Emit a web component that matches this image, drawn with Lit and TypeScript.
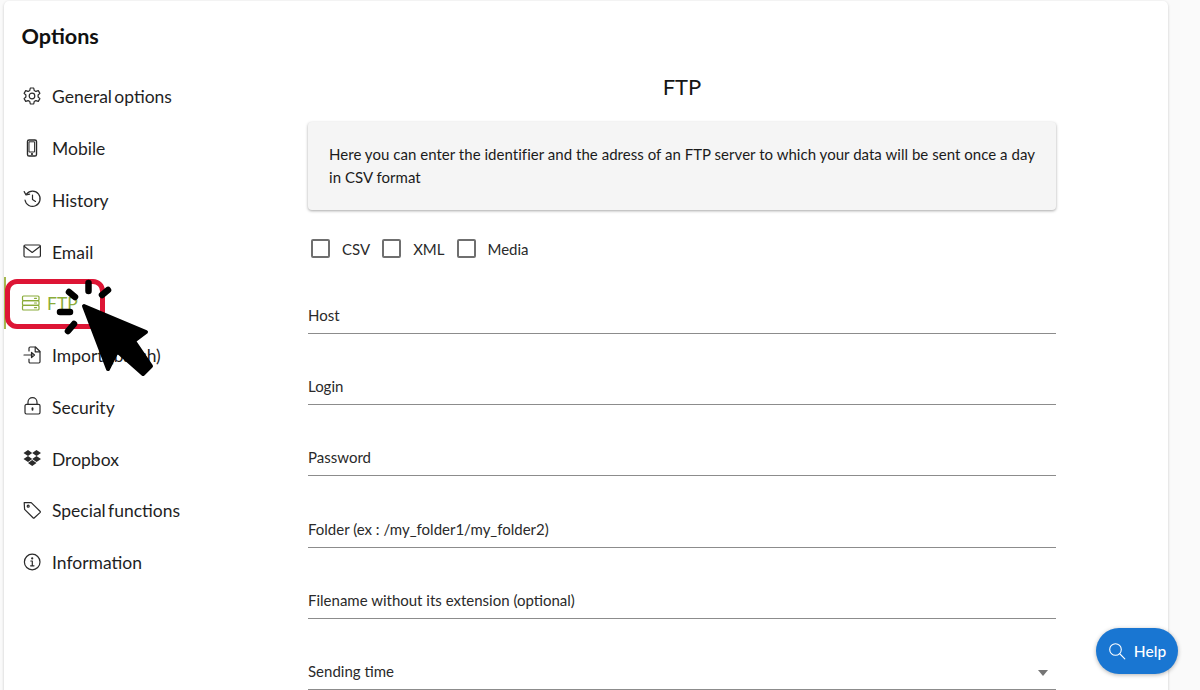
import { LitElement, html, css, svg } from "lit";
import { customElement } from "lit/decorators.js";

const ic = (body: unknown) => html`<svg class="ic" viewBox="0 0 20 20" fill="none" stroke="currentColor" stroke-width="1.2" stroke-linecap="round" stroke-linejoin="round">${body}</svg>`;

const icons: Record<string, unknown> = {
  gear: svg`<circle cx="10" cy="10" r="2.8"/><path d="M8.3 2h3.400l.5 2.400 1.700 1 2.400-.8 1.600 2.800-1.800 1.600v2l1.800 1.600-1.600 2.800-2.400-.8-1.700 1-.5 2.400H8.300l-.5-2.400-1.700-1-2.400.8-1.600-2.800 1.800-1.600V9L2.100 7.400l1.600-2.800 2.400.8 1.700-1z"/>`,
  mobile: svg`<rect x="5.5" y="2" width="9" height="16" rx="1.6" stroke-width="1.4"/><rect x="7.4" y="3.8" width="5.2" height="10.2" stroke-width="1"/><circle cx="10" cy="16" r=".5" fill="currentColor"/>`,
  history: svg`<path d="M4.6 5A7.6 7.6 0 1 1 3 11"/><path d="M2.2 2.6 4 6l3.6-.8"/><path d="M10.5 6v4.6l3 1.8"/>`,
  mail: svg`<rect x="2" y="4" width="16.4" height="12" rx="1.2"/><path d="m2.4 5.4 7.8 6 7.8-6"/>`,
  server: svg`<rect x="1.5" y="3" width="16.500" height="4.600" rx="1"/><rect x="1.500" y="7.700" width="16.500" height="4.600" rx="1"/><rect x="1.500" y="12.400" width="16.500" height="4.600" rx="1"/><path d="M13.500 5.300h2M13.500 10h2M13.500 14.700h2"/>`,
  import: svg`<path d="M7 6V3.200c0-.7.5-1.200 1.200-1.200h5.300L18 6.500v10.300c0 .7-.5 1.200-1.200 1.200H8.200C7.500 18 7 17.500 7 16.800V14"/><path d="M13.200 2.200v4.600h4.600"/><path d="M2 10h9"/><path d="m9.500 7.400 3 2.600-3 2.600z"/>`,
  lock: svg`<rect x="3" y="8.400" width="15" height="9.600" rx="1.400"/><path d="M6 8.400V6.200a4.500 4.500 0 0 1 9 0v2.200"/><path d="M10.500 12.200v1.600" stroke-width="1.800"/>`,
  dropbox: svg`<path fill="currentColor" stroke="none" d="M6 2 1.500 5 6 8l4.200-3zM14.500 2 10.200 5l4.300 3 4.500-3zM1.500 11 6 14l4.200-3L6 8zM14.500 8l-4.300 3 4.300 3 4.500-3zM6 15l4.200 3 4.300-3-4.300-3z"/>`,
  tag: svg`<path d="M2.200 2.600h7L18 11.200a1 1 0 0 1 0 1.400l-5.600 5.200a1 1 0 0 1-1.400 0L2.600 9.400z"/><circle cx="6.200" cy="6.200" r="1"/>`,
  info: svg`<circle cx="10.200" cy="10" r="7.800"/><path d="M8.800 9h1.500v4.600M8.600 13.800h3.400"/><circle cx="10.200" cy="6.400" r=".5" fill="currentColor"/>`,
};

const nav = [
  ["gear", "General options"], ["mobile", "Mobile"], ["history", "History"], ["mail", "Email"],
  ["server", "FTP"], ["import", "Import (batch)"], ["lock", "Security"], ["dropbox", "Dropbox"],
  ["tag", "Special functions"], ["info", "Information"],
];
const fields = ["Host", "Login", "Password", "Folder (ex : /my_folder1/my_folder2)", "Filename without its extension (optional)"];

@customElement("app-root")
export class AppRoot extends LitElement {
  static styles = css`
    :host { display: block; width: 1200px; height: 690px; overflow: hidden; position: relative; background: #fafafa; font-family: Lato, sans-serif; color: #1b1b1b; }
    .card { box-sizing: border-box; width: 1164px; height: 700px; margin: 1px 0 0 4px; background: #fff; border-radius: 5px; box-shadow: 0 1px 3px rgba(0,0,0,.2); display: flex; }
    .side { width: 304px; flex: none; padding: 20px 0 0 0; box-sizing: border-box; }
    h1 { margin: 0 0 0 17.5px; font-size: 21.6px; line-height: 30px; font-weight: 700; color: #111; }
    ul { list-style: none; margin: 20px 0 0; padding: 0; }
    li { height: 51.75px; display: flex; align-items: center; padding-left: 18px; font-size: 17.5px; word-spacing: -2.2px; color: #1f1f1f; box-sizing: border-box; }
    li.wide { word-spacing: 1px; }
    .ic { width: 20px; height: 20px; flex: none; margin-right: 10px; color: #2a2a2a; position: relative; top: -1px; }
    li.active { color: #8aac3a; padding-left: 17px; }
    li.active .ic { color: #8aac3a; margin-right: 6px; }
    .main { width: 748px; flex: none; padding-top: 72px; }
    h2 { margin: 0; text-align: center; font-size: 22px; line-height: 28px; font-weight: 400; color: #151515; }
    .note { margin-top: 21px; background: #f5f5f5; border-radius: 4px; box-shadow: 0 1px 3px rgba(0,0,0,.35); padding: 21px 21px 21px; font-size: 15px; letter-spacing: .035px; line-height: 22.5px; color: #1b1b1b; height: 88px; box-sizing: border-box; }
    .checks { display: flex; align-items: center; margin: 26.5px 0 0 3px; height: 24px; font-size: 15px; color: #2a2a2a; }
    .box { width: 15px; height: 15px; border: 2px solid #6f6f6f; border-radius: 2px; flex: none; margin-right: 12px; }
    .checks span { margin-right: 12px; }
    .checks span.last { margin-right: 0; }
    .fields { margin-top: 2px; }
    .field { height: 71.3px; box-sizing: border-box; border-bottom: 1px solid #8c8c8c; display: flex; align-items: flex-end; justify-content: space-between; padding-bottom: 8px; font-size: 15px; line-height: 20px; color: #2a2a2a; }
    .caret { width: 0; height: 0; border: 5.5px solid transparent; border-top: 6px solid #757575; border-bottom: 0; margin: 0 8px 5px 0; }
    .strip { position: absolute; left: 4px; top: 277px; width: 2px; height: 52px; background: #a5b84f; }
    .ring { position: absolute; left: 5px; top: 279px; width: 100px; height: 50px; box-sizing: border-box; border: 5px solid #dd1535; border-radius: 12px; }
    .cursor { position: absolute; left: 50px; top: 275px; width: 110px; height: 105px; }
    .help { position: absolute; left: 1096px; top: 628px; width: 82px; height: 46px; border-radius: 23px; background: #1976d2; box-shadow: 0 1px 4px rgba(0,0,0,.3); color: #fff; display: flex; align-items: center; justify-content: center; gap: 8px; font-size: 15.5px; font-weight: 500; }
    .help svg { width: 18px; height: 18px; }
  `;

  render() {
    return html`
      <div class="card">
        <aside class="side">
          <h1>Options</h1>
          <ul>
            ${nav.map(([i, t]) => html`<li class=${t === "FTP" ? "active" : t.startsWith("Import") ? "wide" : ""}>${ic(icons[i])}${t}</li>`)}
          </ul>
        </aside>
        <main class="main">
          <h2>FTP</h2>
          <div class="note">Here you can enter the identifier and the adress of an FTP server to which your data will be sent once a day in CSV format</div>
          <div class="checks">
            <i class="box"></i><span>CSV</span>
            <i class="box"></i><span>XML</span>
            <i class="box"></i><span class="last">Media</span>
          </div>
          <div class="fields">
            ${fields.map((f) => html`<div class="field">${f}</div>`)}
            <div class="field">Sending time<i class="caret"></i></div>
          </div>
        </main>
      </div>
      <div class="strip"></div>
      <div class="ring"></div>
      <svg class="cursor" viewBox="0 0 110 105" fill="none" stroke="#000" stroke-width="6.5" stroke-linecap="round">
        <path d="M38.5 8v8M19 17l6 5M10 37h10M18 56l6-7M52 20l6-5"/>
        <path fill="#000" stroke-width="4" stroke-linejoin="round" d="M34 31 96 57 84 66 101 91 93 99 67 76 58 94z"/>
      </svg>
      <div class="help">
        <svg viewBox="0 0 18 18" fill="none" stroke="#fff" stroke-width="1.1" stroke-linecap="round"><circle cx="7.5" cy="7.5" r="5.8"/><path d="m12 12 4.8 4.8"/></svg>
        Help
      </div>
    `;
  }
}
